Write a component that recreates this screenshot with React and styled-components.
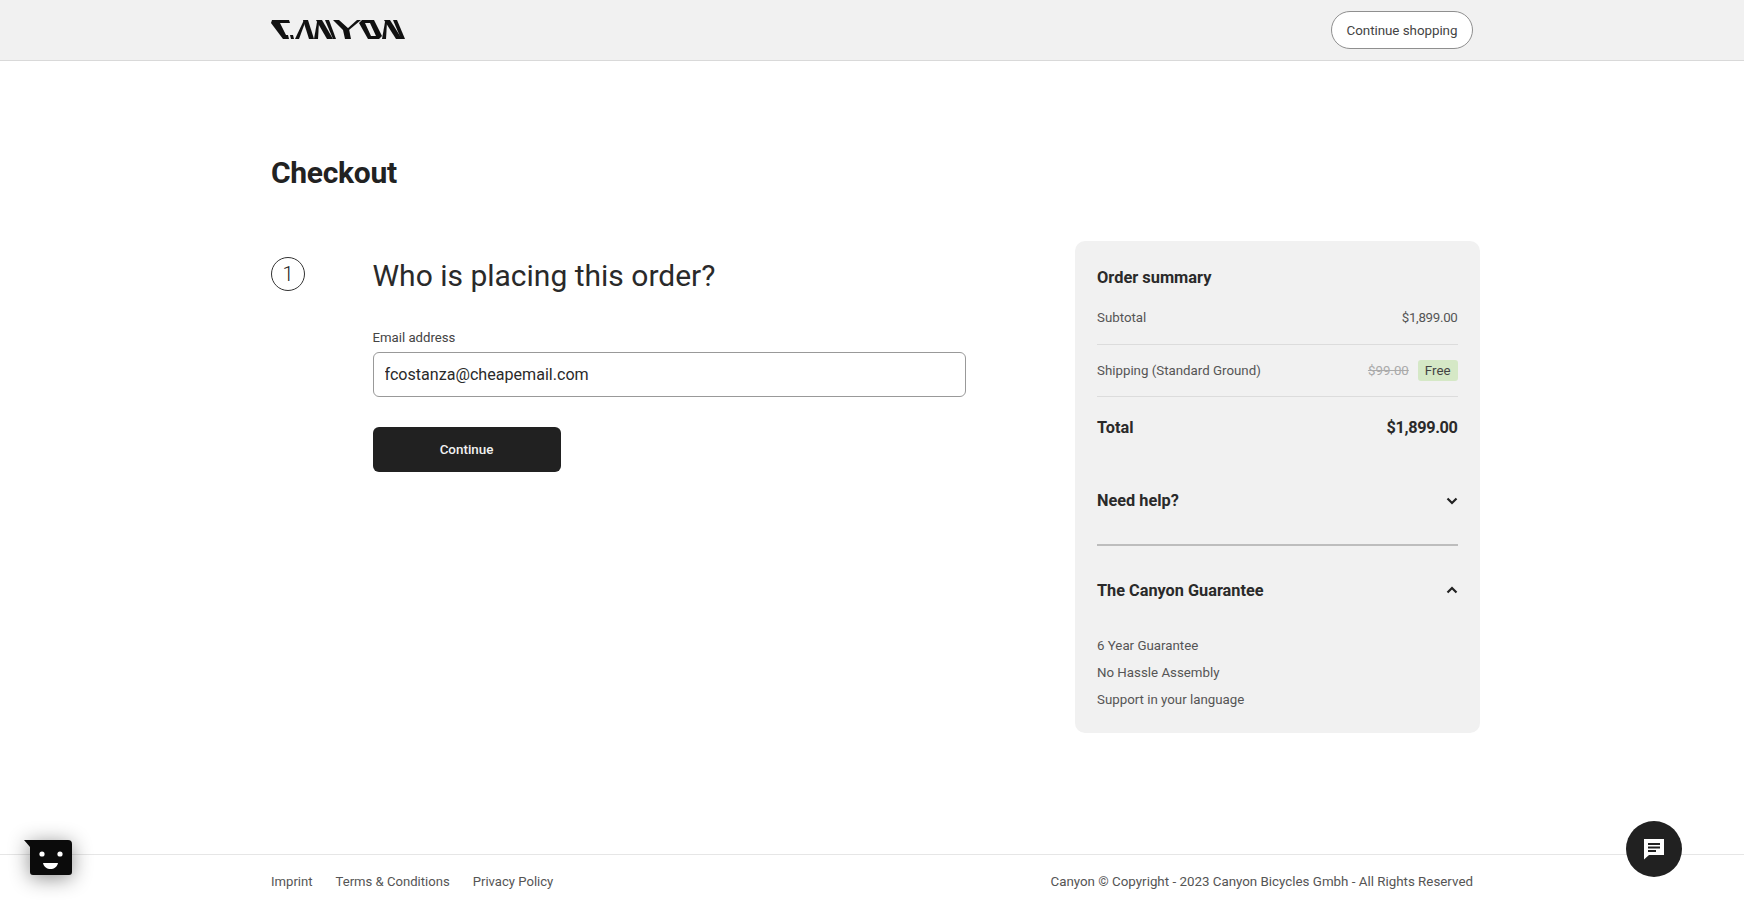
import React from 'react';
import styled, { createGlobalStyle } from 'styled-components';

const Global = createGlobalStyle`
  html, body {
    margin: 0;
    padding: 0;
    background: #fff;
    color: #222;
    font-family: Roboto, "Liberation Sans", sans-serif;
  }
  * { box-sizing: border-box; }
`;

const Page = styled.div`
  min-height: 907px;
  display: flex;
  flex-direction: column;
`;

const Wrap = styled.div`
  width: 1202px;
  margin: 0 auto;
`;

const Header = styled.header`
  height: 61px;
  background: #f1f1f1;
  border-bottom: 1px solid #d9d9d9;
`;

const HeaderRow = styled(Wrap)`
  height: 60px;
  display: flex;
  align-items: center;
  justify-content: space-between;
`;

const ShopButton = styled.button`
  width: 142px;
  height: 38px;
  padding: 0;
  background: #fff;
  border: 1px solid #8f8f8f;
  border-radius: 19px;
  color: #444;
  font: 400 13.4px Roboto, sans-serif;
  letter-spacing: -0.05px;
`;

const Main = styled(Wrap)`
  flex: 1;
`;

const Title = styled.h1`
  margin: 0;
  padding-top: 89px;
  font-size: 30px;
  line-height: 46px;
  font-weight: 700;
  letter-spacing: -0.3px;
  color: #222;
`;

const Columns = styled.div`
  display: flex;
  justify-content: space-between;
  margin-top: 45px;
  margin-right: -7px;
`;

const Step = styled.section`
  display: flex;
  padding-top: 16px;
`;

const StepBadge = styled.div`
  width: 34px;
  height: 34px;
  margin-right: 67.5px;
  display: flex;
  align-items: center;
  justify-content: center;
  border: 1px solid #333;
  border-radius: 50%;
  font-size: 20px;
  font-weight: 300;
`;

const StepBody = styled.div`
  width: 593.5px;
`;

const StepTitle = styled.h2`
  margin: 1px 0 35px;
  font-size: 30px;
  line-height: 36px;
  font-weight: 400;
  color: #2a2a2a;
`;

const Label = styled.label`
  display: block;
  margin-bottom: 5px;
  font-size: 13.2px;
  line-height: 18px;
  color: #444;
`;

const EmailInput = styled.input`
  display: block;
  width: 100%;
  height: 45px;
  padding: 0 11px;
  border: 1px solid #999;
  border-radius: 6px;
  background: #fff;
  font: 400 16.1px Roboto, sans-serif;
  color: #2a2a2a;
  outline: none;
`;

const SubmitButton = styled.button`
  display: block;
  width: 188px;
  height: 45px;
  margin-top: 30px;
  border: 0;
  border-radius: 6px;
  background: #212121;
  color: #f1f1f1;
  font: 500 13.4px Roboto, sans-serif;
`;

const Summary = styled.aside`
  width: 405px;
  height: 492px;
  padding: 26px 22.5px 0 22px;
  background: #f1f1f1;
  border-radius: 10px;
`;

const SummaryTitle = styled.h3`
  margin: 0 0 9px;
  font-size: 16.4px;
  line-height: 22px;
  font-weight: 700;
  color: #2a2a2a;
`;

const Row = styled.div`
  display: flex;
  align-items: center;
  justify-content: space-between;
  height: ${(p) => p.$height}px;
  padding-bottom: ${(p) => p.$pad || 0}px;
  border-bottom: 1px solid #dcdcdc;
  font-size: 13.3px;
  color: #555;
`;

const Amount = styled.span`
  letter-spacing: -0.3px;
`;

const Prices = styled.div`
  display: flex;
  align-items: center;
  gap: 9px;
`;

const OldPrice = styled.s`
  color: #aaa;
`;

const FreeTag = styled.span`
  padding: 3px 7px;
  background: #d5e8c6;
  border-radius: 3px;
  color: #444;
`;

const TotalRow = styled.div`
  display: flex;
  align-items: center;
  justify-content: space-between;
  height: 60px;
  font-size: 16.3px;
  font-weight: 700;
  color: #2a2a2a;
`;

const TotalAmount = styled.span`
  letter-spacing: -0.35px;
`;

const Accordion = styled.div`
  display: flex;
  align-items: center;
  justify-content: space-between;
  height: ${(p) => p.$height}px;
  border-bottom: ${(p) => (p.$line ? '2px solid #bdbdbd' : '0')};
  font-size: 16.3px;
  font-weight: 700;
  color: #2a2a2a;
`;

const Bullets = styled.ul`
  margin: -2px 0 0;
  padding: 0;
  list-style: none;
`;

const Bullet = styled.li`
  height: 27px;
  line-height: 27px;
  font-size: 13.3px;
  color: #555;
`;

const Footer = styled.footer`
  height: 53px;
  border-top: 1px solid #e6e6e6;
`;

const FooterRow = styled(Wrap)`
  height: 53px;
  display: flex;
  align-items: center;
  justify-content: space-between;
  font-size: 13.35px;
  color: #555;
`;

const FooterLinks = styled.nav`
  display: flex;
  gap: 23px;
  font-size: 13.1px;
`;

const BotButton = styled.div`
  position: fixed;
  left: 24px;
  top: 840px;
  width: 48px;
  height: 36px;
  filter: drop-shadow(0 3px 10px rgba(0, 0, 0, 0.45));
`;

const ChatButton = styled.button`
  position: fixed;
  left: 1626px;
  top: 821px;
  width: 56px;
  height: 56px;
  display: flex;
  align-items: center;
  justify-content: center;
  padding: 0;
  border: 0;
  border-radius: 50%;
  background: #212121;
`;

const Logo = () => (
  <svg width="134" height="20" viewBox="0 0 134 20">
    <g fill="#111">
      <polygon points="1,0 18,0 19,3 9,3 15,15 17,15 18,19 12,19 0,3" />
      <polygon points="19,15 22,15 23,19 20,19" />
      <polygon points="24,19 33,0 35,0 28,19" />
      <polygon points="32,0 37,0 43,19 38,19" />
      <polygon points="43,19 46,2 48,2 47,19" />
      <polygon points="45,0 51,0 62,19 56,19" />
      <polygon points="54,0 58,0 65,19 62,19" />
      <polygon points="62,0 68,0 78,9 80,19 74,19 72,10" />
      <polygon points="86,0 90,0 78,10 76,9" />
      <path d="M91 0h12l8 16-3 3H97L88 3ZM94 3l6 13h5l-6-13Z" fillRule="evenodd" />
      <polygon points="111,19 114,2 116,2 115,19" />
      <polygon points="113,0 119,0 131,19 125,19" />
      <polygon points="122,0 126,0 134,19 130,19" />
    </g>
  </svg>
);

const Chevron = ({ up }) => (
  <svg width="12" height="8" viewBox="0 0 12 8">
    <path
      d={up ? 'M1.5 6.5 6 2l4.5 4.5' : 'M1.5 1.5 6 6l4.5-4.5'}
      fill="none"
      stroke="#222"
      strokeWidth="2.2"
    />
  </svg>
);

const App = () => {
  return (
    <Page>
      <Global />
      <Header>
        <HeaderRow>
          <Logo />
          <ShopButton>Continue shopping</ShopButton>
        </HeaderRow>
      </Header>
      <Main>
        <Title>Checkout</Title>
        <Columns>
          <Step>
            <StepBadge>1</StepBadge>
            <StepBody>
              <StepTitle>Who is placing this order?</StepTitle>
              <Label>Email address</Label>
              <EmailInput defaultValue="fcostanza@cheapemail.com" />
              <SubmitButton>Continue</SubmitButton>
            </StepBody>
          </Step>
          <Summary>
            <SummaryTitle>Order summary</SummaryTitle>
            <Row $height={47} $pad={7}>
              <span>Subtotal</span>
              <Amount>$1,899.00</Amount>
            </Row>
            <Row $height={52}>
              <span>Shipping (Standard Ground)</span>
              <Prices>
                <OldPrice>$99.00</OldPrice>
                <FreeTag>Free</FreeTag>
              </Prices>
            </Row>
            <TotalRow>
              <span>Total</span>
              <TotalAmount>$1,899.00</TotalAmount>
            </TotalRow>
            <Accordion $height={89} $line>
              <span>Need help?</span>
              <Chevron />
            </Accordion>
            <Accordion $height={88}>
              <span>The Canyon Guarantee</span>
              <Chevron up />
            </Accordion>
            <Bullets>
              <Bullet>6 Year Guarantee</Bullet>
              <Bullet>No Hassle Assembly</Bullet>
              <Bullet>Support in your language</Bullet>
            </Bullets>
          </Summary>
        </Columns>
      </Main>
      <Footer>
        <FooterRow>
          <FooterLinks>
            <span>Imprint</span>
            <span>Terms &amp; Conditions</span>
            <span>Privacy Policy</span>
          </FooterLinks>
          <span>Canyon © Copyright - 2023 Canyon Bicycles Gmbh - All Rights Reserved</span>
        </FooterRow>
      </Footer>
      <BotButton>
        <svg width="48" height="36" viewBox="0 0 48 36">
          <path d="M0 0h44a4 4 0 0 1 4 4v28a3 3 0 0 1-3 3H9a3 3 0 0 1-3-3V7Z" fill="#0b0b0b" />
          <circle cx="18" cy="14" r="2.6" fill="#fff" />
          <circle cx="36" cy="14" r="2.6" fill="#fff" />
          <path d="M19 23h15c-1 4-4 6-7.5 6S20 27 19 23Z" fill="#fff" />
        </svg>
      </BotButton>
      <ChatButton>
        <svg width="24" height="24" viewBox="0 0 24 24">
          <path
            d="M2 2h20v16H7l-5 4.5ZM6 6v2h12V6Zm0 3.5v2h12v-2ZM6 13v2h8v-2Z"
            fill="#fff"
            fillRule="evenodd"
          />
        </svg>
      </ChatButton>
    </Page>
  );
};

export default App;
